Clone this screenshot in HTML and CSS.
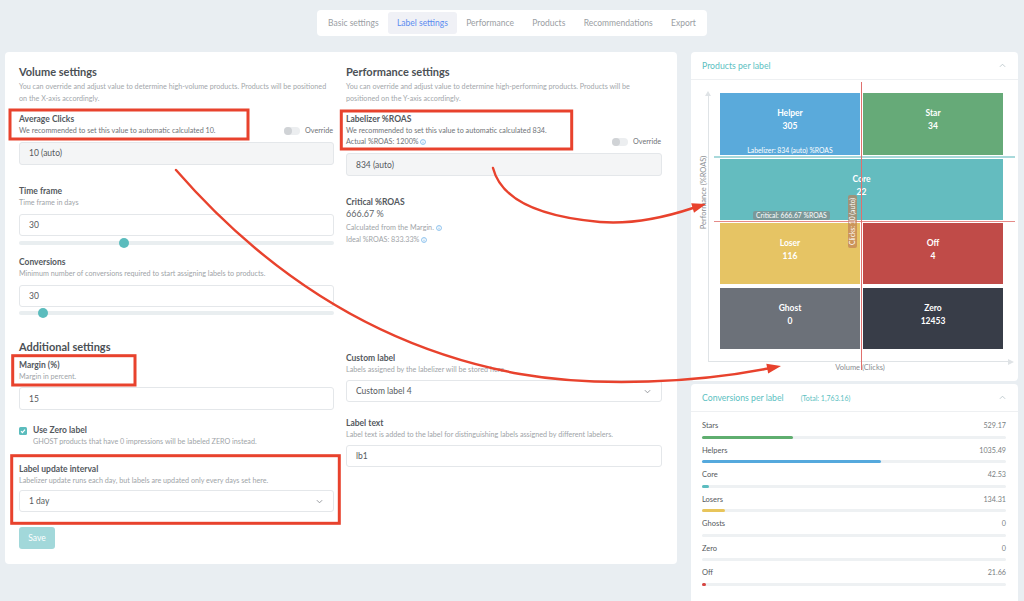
FILE: index.html
```html
<!DOCTYPE html>
<html>
<head>
<meta charset="utf-8">
<title>Label settings</title>
<link rel="stylesheet" href="styles.css">
</head>
<body>
<div class="page">
  <nav class="tabs">
    <span class="tab">Basic settings</span>
    <span class="tab active">Label settings</span>
    <span class="tab">Performance</span>
    <span class="tab">Products</span>
    <span class="tab">Recommendations</span>
    <span class="tab">Export</span>
  </nav>

  <main class="main">
    <section class="card settings">
      <!-- Volume settings -->
      <div class="col">
        <h2>Volume settings</h2>
        <p class="desc">You can override and adjust value to determine high-volume products. Products will be positioned on the X-axis accordingly.</p>
        <div class="field-head mt9">
          <div>
            <div class="label">Average Clicks</div>
            <div class="hint strong">We recommended to set this value to automatic calculated 10.</div>
          </div>
          <div class="override"><span class="toggle"><span class="knob"></span></span>Override</div>
        </div>
        <div class="input disabled mt5">10 (auto)</div>

        <div class="label mt21">Time frame</div>
        <div class="hint">Time frame in days</div>
        <div class="input mt6">30</div>
        <div class="slider mt2"><div class="slider-track"><span class="thumb" style="left:33.3%"></span></div></div>

        <div class="label mt9">Conversions</div>
        <div class="hint">Minimum number of conversions required to start assigning labels to products.</div>
        <div class="input mt6">30</div>
        <div class="slider mt1"><div class="slider-track"><span class="thumb" style="left:7.5%"></span></div></div>
      </div>

      <!-- Performance settings -->
      <div class="col">
        <h2>Performance settings</h2>
        <p class="desc">You can override and adjust value to determine high-performing products. Products will be positioned on the Y-axis accordingly.</p>
        <div class="field-head mt9">
          <div>
            <div class="label">Labelizer %ROAS</div>
            <div class="hint strong">We recommended to set this value to automatic calculated 834.</div>
            <div class="hint strong">Actual %ROAS: 1200% <svg class="info" viewBox="0 0 8 8"><circle cx="4" cy="4" r="3.3"/><line x1="4" y1="3.5" x2="4" y2="6"/><line x1="4" y1="2" x2="4" y2="2.6"/></svg></div>
          </div>
          <div class="override"><span class="toggle"><span class="knob"></span></span>Override</div>
        </div>
        <div class="input disabled mt6">834 (auto)</div>

        <div class="label mt21">Critical %ROAS</div>
        <div class="big">666.67 %</div>
        <div class="hint lh12 mt2">Calculated from the Margin. <svg class="info" viewBox="0 0 8 8"><circle cx="4" cy="4" r="3.3"/><line x1="4" y1="3.5" x2="4" y2="6"/><line x1="4" y1="2" x2="4" y2="2.6"/></svg></div>
        <div class="hint lh12">Ideal %ROAS: 833.33% <svg class="info" viewBox="0 0 8 8"><circle cx="4" cy="4" r="3.3"/><line x1="4" y1="3.5" x2="4" y2="6"/><line x1="4" y1="2" x2="4" y2="2.6"/></svg></div>
      </div>

      <!-- Additional settings -->
      <div class="col">
        <h2>Additional settings</h2>
        <div class="label mt5">Margin (%)</div>
        <div class="hint">Margin in percent.</div>
        <div class="input tall mt5">15</div>

        <div class="check-row mt14">
          <span class="checkbox"><svg viewBox="0 0 8 8"><polyline points="2,4.2 3.4,5.6 6,2.6"/></svg></span>
          <div>
            <div class="label">Use Zero label</div>
            <div class="hint">GHOST products that have 0 impressions will be labeled ZERO instead.</div>
          </div>
        </div>

        <div class="label mt17">Label update interval</div>
        <div class="hint">Labelizer update runs each day, but labels are updated only every days set here.</div>
        <div class="input select mt4">1 day<svg class="chev-down" viewBox="0 0 8 5"><polyline points="1,1 4,4 7,1"/></svg></div>

        <button class="save">Save</button>
      </div>

      <div class="col pt12">
        <div class="label">Custom label</div>
        <div class="hint">Labels assigned by the labelizer will be stored here.</div>
        <div class="input select mt5">Custom label 4<svg class="chev-down" viewBox="0 0 8 5"><polyline points="1,1 4,4 7,1"/></svg></div>

        <div class="label mt15">Label text</div>
        <div class="hint">Label text is added to the label for distinguishing labels assigned by different labelers.</div>
        <div class="input mt5">lb1</div>
      </div>
    </section>

    <aside class="side">
      <section class="panel">
        <header class="panel-head">
          <span class="panel-title">Products per label</span>
          <svg class="chev-up" viewBox="0 0 8 5"><polyline points="1,4 4,1 7,4"/></svg>
        </header>
        <div class="chart">
          <div class="plot">
            <div class="quads">
              <div class="q helper">Helper<br>305</div>
              <div class="q star">Star<br>34</div>
              <div class="q core">Core<br>22</div>
              <div class="q loser">Loser<br>116</div>
              <div class="q off">Off<br>4</div>
              <div class="q ghost">Ghost<br>0</div>
              <div class="q zero">Zero<br>12453</div>
            </div>
            <span class="y-label">Performance (%ROAS)</span>
            <span class="line-teal"></span>
            <span class="line-red-h"></span>
            <span class="line-red-v"></span>
            <span class="tag-labelizer">Labelizer: 834 (auto) %ROAS</span>
            <span class="tag-critical">Critical: 666.67 %ROAS</span>
            <span class="tag-clicks">Clicks: 10 (auto)</span>
          </div>
          <div class="x-label">Volume (Clicks)</div>
        </div>
      </section>

      <section class="panel conv">
        <header class="panel-head">
          <span class="panel-title">Conversions per label</span>
          <span class="panel-total">(Total: 1,763.16)</span>
          <svg class="chev-up" viewBox="0 0 8 5"><polyline points="1,4 4,1 7,4"/></svg>
        </header>
        <div class="conv-body">
          <div class="conv-row"><div class="conv-top"><span class="conv-name">Stars</span><span class="conv-val">529.17</span></div><div class="track"><div class="fill green" style="width:30.01%"></div></div></div>
          <div class="conv-row"><div class="conv-top"><span class="conv-name">Helpers</span><span class="conv-val">1035.49</span></div><div class="track"><div class="fill blue" style="width:58.73%"></div></div></div>
          <div class="conv-row"><div class="conv-top"><span class="conv-name">Core</span><span class="conv-val">42.53</span></div><div class="track"><div class="fill teal" style="width:2.41%"></div></div></div>
          <div class="conv-row"><div class="conv-top"><span class="conv-name">Losers</span><span class="conv-val">134.31</span></div><div class="track"><div class="fill yellow" style="width:7.62%"></div></div></div>
          <div class="conv-row"><div class="conv-top"><span class="conv-name">Ghosts</span><span class="conv-val">0</span></div><div class="track"><div class="fill gray" style="width:0%"></div></div></div>
          <div class="conv-row"><div class="conv-top"><span class="conv-name">Zero</span><span class="conv-val">0</span></div><div class="track"><div class="fill dark" style="width:0%"></div></div></div>
          <div class="conv-row"><div class="conv-top"><span class="conv-name">Off</span><span class="conv-val">21.66</span></div><div class="track"><div class="fill red" style="width:1.23%"></div></div></div>
        </div>
      </section>
    </aside>
  </main>
</div>

<svg class="annot" viewBox="0 0 1024 601" width="1024" height="601">
  <g class="annot-box">
    <rect x="10" y="110" width="238" height="29"/>
    <rect x="341.3" y="111" width="230.4" height="38"/>
    <rect x="12.7" y="355.7" width="122.3" height="29.3"/>
    <rect x="11.7" y="455.7" width="327.6" height="67.6"/>
  </g>
  <g class="annot-arrow">
    <path d="M176,170 C250,255 360,345 520,374 C600,388 700,382 768,368.5"/>
    <path d="M493,168 C500,195 530,216 600,222 C640,225 675,214 693,208"/>
  </g>
  <g class="annot-head">
    <polygon points="781,366 768.2,373.6 766.3,363.8"/>
    <polygon points="706,204 694,212.8 691.2,203.2"/>
  </g>
</svg>
</body>
</html>
```

FILE: styles.css
```css
* { box-sizing: border-box; margin: 0; padding: 0; }

html, body {
  width: 1024px;
  height: 601px;
  overflow: hidden;
}

body {
  position: relative;
  background: #e9eef2;
  font-family: Lato, "Open Sans", "DejaVu Sans", sans-serif;
  color: #555;
}

.page { padding-top: 10px; }

/* Tabs */
.tabs {
  display: flex;
  width: max-content;
  margin: 0 auto;
  background: #fff;
  border-radius: 4px;
  padding: 2px;
  height: 26px;
}
.tab {
  font-size: 8.5px;
  line-height: 22px;
  color: #9a9ea3;
  padding: 0 9.2px;
  border-radius: 3px;
}
.tab.active { background: #f0f1f6; color: #5b8cf0; }

/* Main */
.main {
  display: flex;
  align-items: flex-start;
  gap: 14px;
  margin-top: 16px;
  padding-left: 5px;
}

.card { background: #fff; border-radius: 4px; }

.settings {
  width: 672px;
  padding: 13px 15px 15px 14px;
  display: grid;
  grid-template-columns: 315px 316px;
  column-gap: 12px;
  row-gap: 22px;
}

.col { display: flex; flex-direction: column; }
.pt12 { padding-top: 12.5px; }

h2 {
  font-size: 11px;
  line-height: 14px;
  font-weight: 700;
  color: #4b5055;
}
.desc {
  font-size: 7.2px;
  line-height: 12px;
  color: #a3a7ab;
  margin-top: 2px;
}
.label {
  font-size: 8.5px;
  line-height: 11px;
  font-weight: 700;
  color: #54595e;
}
.hint {
  font-size: 7.2px;
  line-height: 11px;
  color: #a0a4a8;
}
.hint.strong { color: #6f7377; }
.lh12 { line-height: 12px; }
.big {
  font-size: 9px;
  line-height: 12px;
  color: #62666a;
}

.mt1 { margin-top: 1.5px; }
.mt2 { margin-top: 2px; }
.mt4 { margin-top: 4.5px; }
.mt5 { margin-top: 5.5px; }
.mt6 { margin-top: 6px; }
.mt9 { margin-top: 9px; }
.mt14 { margin-top: 14.5px; }
.mt15 { margin-top: 15.5px; }
.mt17 { margin-top: 17px; }
.mt21 { margin-top: 21px; }

.info {
  width: 6px;
  height: 6px;
  vertical-align: -0.5px;
  fill: none;
  stroke: #5ea8e6;
  stroke-width: 0.9;
}

.field-head {
  display: flex;
  justify-content: space-between;
  align-items: flex-end;
}
.override {
  display: flex;
  align-items: center;
  gap: 5px;
  height: 11px;
  font-size: 7.2px;
  color: #6f7377;
  padding-right: 1px;
}
.toggle {
  display: flex;
  align-items: center;
  width: 16px;
  height: 8px;
  border-radius: 4px;
  background: #eceef0;
}
.knob {
  width: 8px;
  height: 8px;
  border-radius: 50%;
  background: #d0d3d6;
}

.input {
  display: flex;
  align-items: center;
  height: 22px;
  border: 1px solid #e4e7ea;
  border-radius: 3px;
  padding: 0 9px;
  font-size: 8.5px;
  color: #55595d;
  background: #fff;
}
.input.tall { height: 23px; }
.input.disabled { background: #f4f5f6; height: 23px; }
.select { justify-content: space-between; }
.chev-down {
  width: 7px;
  height: 5px;
  fill: none;
  stroke: #8a8e92;
  stroke-width: 1;
  margin-right: 1px;
}

.slider { height: 10px; display: flex; align-items: center; }
.slider-track {
  position: relative;
  width: 100%;
  height: 4px;
  border-radius: 2px;
  background: #e9eef0;
}
.thumb {
  position: absolute;
  top: -3px;
  width: 10px;
  height: 10px;
  margin-left: -5px;
  border-radius: 50%;
  background: #5bbcbd;
}

.check-row { display: flex; gap: 6px; align-items: flex-start; }
.checkbox {
  flex: none;
  width: 8px;
  height: 8px;
  margin-top: 2.5px;
  border-radius: 1.5px;
  background: #5bbcbd;
  display: flex;
}
.checkbox svg {
  width: 8px;
  height: 8px;
  fill: none;
  stroke: #fff;
  stroke-width: 1.2;
}

.save {
  align-self: flex-start;
  margin-top: 15px;
  width: 36px;
  height: 22px;
  border: none;
  border-radius: 3px;
  background: #a2d8da;
  color: #fff;
  font-family: inherit;
  font-size: 8.5px;
}

/* Side panels */
.side {
  width: 327px;
  display: flex;
  flex-direction: column;
  gap: 3px;
}
.panel { background: #fff; border-radius: 4px; }
.panel-head {
  display: flex;
  align-items: center;
  height: 28px;
  padding: 0 12px 0 11px;
  border-bottom: 1px solid #eef0f2;
}
.panel-title { font-size: 8.7px; color: #5cbfc2; }
.panel-total { font-size: 7px; color: #5cbfc2; margin-left: 17px; }
.chev-up {
  margin-left: auto;
  width: 7px;
  height: 5px;
  fill: none;
  stroke: #b9c6ca;
  stroke-width: 1;
}

.chart { height: 301px; padding-top: 13px; }
.plot {
  position: relative;
  margin: 0 6px 0 17px;
  padding: 0 9px 12.5px 11px;
  border-left: 1px solid #dfe3e6;
  border-bottom: 1px solid #dfe3e6;
}
.plot::before {
  content: "";
  position: absolute;
  left: -4px;
  top: -2px;
  border-left: 3px solid transparent;
  border-right: 3px solid transparent;
  border-bottom: 5px solid #dfe3e6;
}
.plot::after {
  content: "";
  position: absolute;
  right: -2px;
  bottom: -4px;
  border-top: 3px solid transparent;
  border-bottom: 3px solid transparent;
  border-left: 6px solid #dfe3e6;
}

.quads {
  display: grid;
  grid-template-columns: 1fr 1fr;
  grid-template-rows: 62px 61px 61px 61px;
  gap: 3.5px 3px;
}
.q {
  padding-top: 14px;
  text-align: center;
  color: #fff;
  font-weight: 700;
  font-size: 8.5px;
  line-height: 13px;
}
.helper { background: #5aaadb; }
.star { background: #66aa78; }
.core { background: #64bcbf; grid-column: 1 / -1; }
.loser { background: #e6c464; }
.off { background: #c04b48; }
.ghost { background: #6c7179; }
.zero { background: #383d48; }

.y-label {
  position: absolute;
  left: -46px;
  top: 94.5px;
  width: 80px;
  text-align: center;
  white-space: nowrap;
  font-size: 7.5px;
  line-height: 9px;
  color: #8a8e92;
  transform: rotate(-90deg);
}
.line-teal {
  position: absolute;
  left: 5px;
  top: 62.5px;
  width: 301px;
  height: 2px;
  background: #a8d9db;
}
.line-red-h {
  position: absolute;
  left: 5px;
  top: 127.5px;
  width: 301px;
  height: 1px;
  background: #e58b88;
}
.line-red-v {
  position: absolute;
  left: 152px;
  top: -11px;
  width: 1.2px;
  height: 288px;
  background: #e0706d;
}
.tag-labelizer {
  position: absolute;
  left: 11px;
  top: 53px;
  width: 140px;
  text-align: center;
  font-size: 6.8px;
  line-height: 8px;
  color: #fff;
}
.tag-critical {
  position: absolute;
  left: 44px;
  top: 118px;
  padding: 0 3px;
  border-radius: 2px;
  background: rgba(130, 140, 140, 0.75);
  font-size: 6.8px;
  line-height: 9px;
  color: #fff;
  white-space: nowrap;
}
.tag-clicks {
  position: absolute;
  left: 117px;
  top: 123.5px;
  width: 53px;
  text-align: center;
  border-radius: 2px;
  background: rgba(190, 125, 85, 0.65);
  font-size: 6.8px;
  line-height: 9px;
  color: #fff;
  white-space: nowrap;
  transform: rotate(-90deg);
}
.x-label {
  margin: 1px 6px 0 17px;
  text-align: center;
  font-size: 7.5px;
  line-height: 10px;
  color: #8a8e92;
}

/* Conversions */
.conv { height: 230px; }
.conv-body { padding: 9px 12px 0 11px; }
.conv-row { margin-bottom: 7px; }
.conv-top {
  display: flex;
  justify-content: space-between;
  align-items: baseline;
  height: 10px;
  line-height: 10px;
}
.conv-name { font-size: 7.5px; color: #55595d; }
.conv-val { font-size: 7.2px; color: #7b7f83; }
.track {
  height: 3px;
  margin-top: 4.5px;
  border-radius: 2px;
  background: #eef1f3;
}
.fill { height: 100%; border-radius: 2px; }
.green { background: #5fae6f; }
.blue { background: #55a9dd; }
.teal { background: #5bbcbf; }
.yellow { background: #e8c55b; }
.gray { background: #6c7179; }
.dark { background: #383d48; }
.red { background: #d64541; }

/* Annotation overlay */
.annot {
  position: absolute;
  left: 0;
  top: 0;
  pointer-events: none;
}
.annot-box rect { fill: none; stroke: #e8422d; stroke-width: 3; }
.annot-arrow path { fill: none; stroke: #e8422d; stroke-width: 2.4; stroke-linecap: round; }
.annot-head polygon { fill: #e8422d; }
```
